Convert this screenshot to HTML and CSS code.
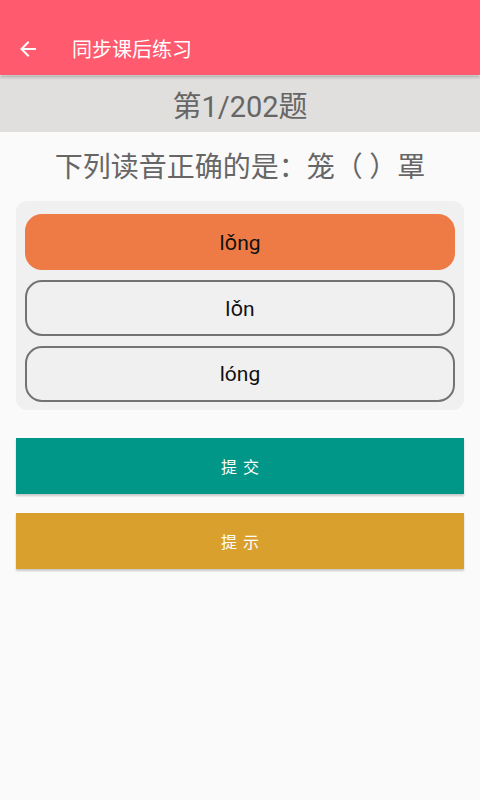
FILE: index.html
```html
<!DOCTYPE html>
<html lang="zh-CN">
<head>
<meta charset="utf-8">
<title>同步课后练习</title>
<link rel="stylesheet" href="styles.css">
</head>
<body>
<div class="app">
  <header class="toolbar">
    <svg class="back" width="18" height="18" viewBox="0 0 18 18" aria-hidden="true">
      <path d="M16 9H3M9 2.5L2.5 9L9 15.5" fill="none" stroke="#fff" stroke-width="2" stroke-linecap="square"/>
    </svg>
    <span class="title">同步课后练习</span>
  </header>
  <div class="counter">第1/202题</div>
  <div class="question">下列读音正确的是：笼（ ）罩</div>
  <div class="options">
    <div class="option selected">lǒng</div>
    <div class="option">lǒn</div>
    <div class="option">lóng</div>
  </div>
  <div class="actions">
    <button class="btn submit">提交</button>
    <button class="btn hint">提示</button>
  </div>
</div>
</body>
</html>
```

FILE: styles.css
```css
html, body {
  margin: 0;
  padding: 0;
}
body {
  width: 480px;
  height: 800px;
  background: #fafafa;
  font-family: "Noto Sans CJK SC", "Noto Sans", sans-serif;
  overflow: hidden;
}
.app {
  display: flex;
  flex-direction: column;
}
.toolbar {
  height: 75px;
  background: #ff5a6e;
  display: flex;
  align-items: center;
  padding-top: 22px;
  box-sizing: border-box;
  box-shadow: 0 2px 3px rgba(0,0,0,0.25);
  position: relative;
  z-index: 1;
}
.back {
  margin-left: 19px;
  margin-top: 1px;
}
.title {
  margin-left: 35px;
  color: #fff;
  font-size: 20px;
  margin-top: -1px;
}
.counter {
  height: 56px;
  margin-top: 1px;
  background: #e0dfdd;
  color: #666;
  font-family: Roboto, "Noto Sans CJK SC", sans-serif;
  font-size: 29px;
  display: flex;
  align-items: center;
  justify-content: center;
}
.question {
  height: 69px;
  display: flex;
  align-items: center;
  justify-content: center;
  color: #666;
  font-size: 28px;
  padding-bottom: 4px;
  box-sizing: border-box;
  white-space: pre;
}
.options {
  margin: 0 16px;
  background: #f0f0f0;
  border-radius: 11px;
  padding: 13px 9px 8px 9px;
  display: flex;
  flex-direction: column;
  gap: 10px;
}
.option {
  height: 56px;
  box-sizing: border-box;
  border: 2px solid #737373;
  border-radius: 17px;
  display: flex;
  align-items: center;
  justify-content: center;
  font-family: Roboto, "Noto Sans", sans-serif;
  font-size: 21px;
  color: #111;
}
.option.selected {
  background: #ee7b45;
  border-color: #ee7b45;
}
.actions {
  margin: 28px 16px 0;
  display: flex;
  flex-direction: column;
  gap: 19px;
}
.btn {
  height: 56px;
  border: none;
  border-radius: 0;
  color: #fff;
  font-family: "Noto Sans CJK SC", sans-serif;
  font-size: 16px;
  letter-spacing: 6px;
  padding: 0 0 0 6px;
  box-shadow: 0 2px 2px rgba(0,0,0,0.2);
}
.submit {
  background: #009688;
}
.hint {
  background: #d9a02e;
}
```
